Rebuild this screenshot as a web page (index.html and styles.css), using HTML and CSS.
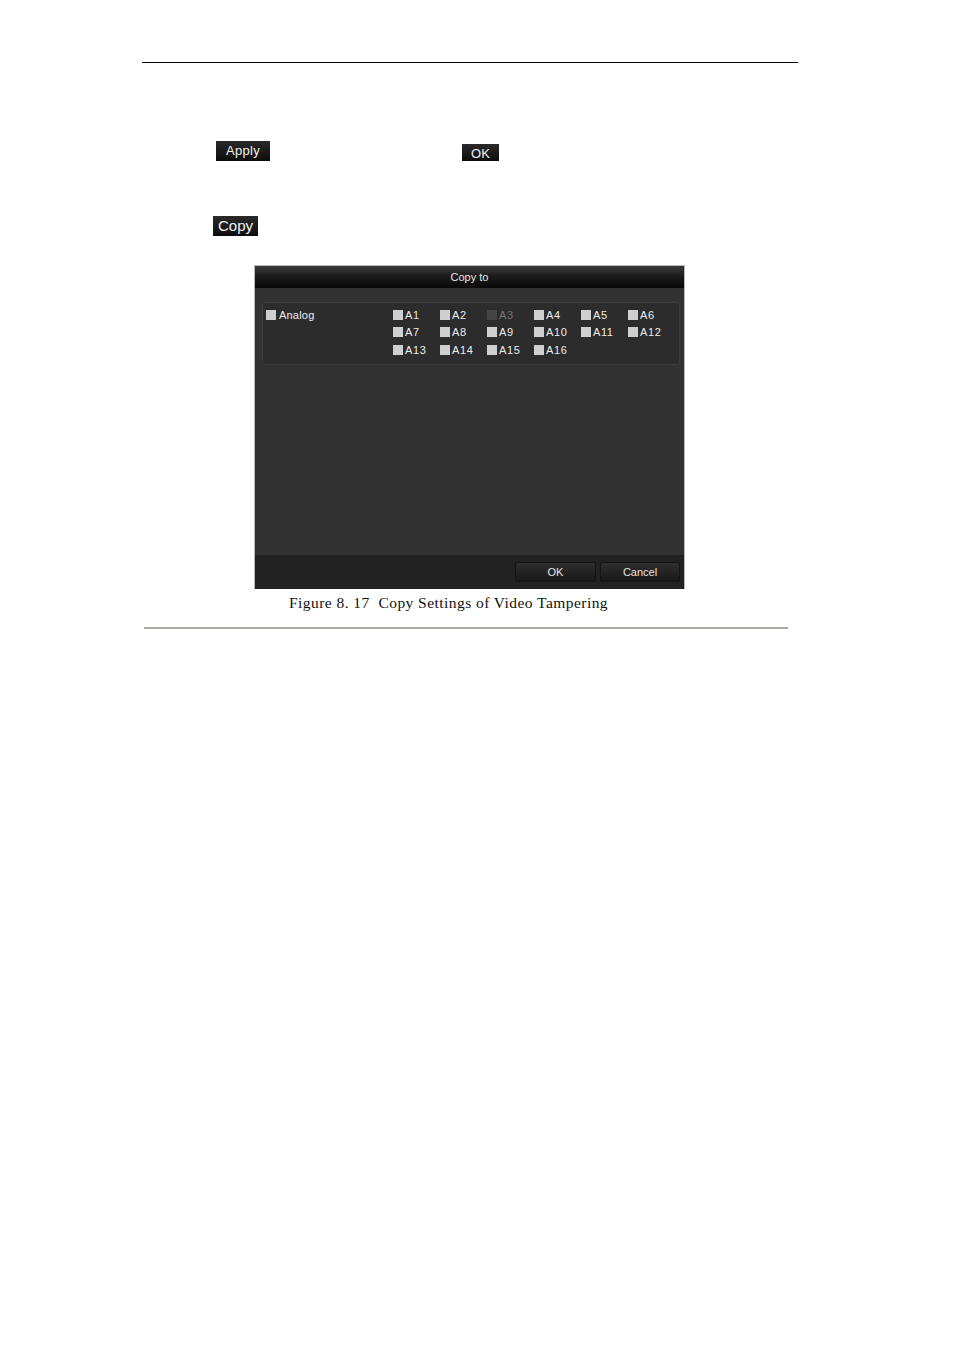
FILE: index.html
```html
<!DOCTYPE html>
<html>
<head>
<meta charset="utf-8">
<link rel="stylesheet" href="styles.css">
</head>
<body>
<div class="page">
  <div class="top-rule"></div>
  <div class="row row-apply">
    <span class="btn btn-apply">Apply</span>
    <span class="btn btn-ok">OK</span>
  </div>
  <div class="row row-copy">
    <span class="btn btn-copy">Copy</span>
  </div>
  <div class="figure">
    <div class="dialog">
      <div class="dlg-title">Copy to</div>
      <div class="dlg-body">
        <div class="panel">
          <div class="analog"><span class="cb"></span><span>Analog</span></div>
          <div class="grid">
            <div class="item"><span class="cb"></span>A1</div>
            <div class="item"><span class="cb"></span>A2</div>
            <div class="item disabled"><span class="cb"></span>A3</div>
            <div class="item"><span class="cb"></span>A4</div>
            <div class="item"><span class="cb"></span>A5</div>
            <div class="item"><span class="cb"></span>A6</div>
            <div class="item"><span class="cb"></span>A7</div>
            <div class="item"><span class="cb"></span>A8</div>
            <div class="item"><span class="cb"></span>A9</div>
            <div class="item"><span class="cb"></span>A10</div>
            <div class="item"><span class="cb"></span>A11</div>
            <div class="item"><span class="cb"></span>A12</div>
            <div class="item"><span class="cb"></span>A13</div>
            <div class="item"><span class="cb"></span>A14</div>
            <div class="item"><span class="cb"></span>A15</div>
            <div class="item"><span class="cb"></span>A16</div>
          </div>
        </div>
      </div>
      <div class="dlg-foot">
        <span class="dbtn dbtn-ok">OK</span>
        <span class="dbtn dbtn-cancel">Cancel</span>
      </div>
    </div>
    <div class="caption">Figure 8. 17 &nbsp;Copy Settings of Video Tampering</div>
  </div>
  <div class="bottom-rule"></div>
</div>
</body>
</html>
```
FILE: styles.css
```css
html, body {
  margin: 0;
  padding: 0;
  background: #fff;
}
.page {
  width: 954px;
  height: 1350px;
  padding-top: 62px;
  box-sizing: border-box;
  font-family: "Liberation Sans", Arial, sans-serif;
}
.top-rule {
  margin-left: 142px;
  width: 656px;
  height: 1px;
  background: #000;
}
.row {
  display: flex;
  align-items: flex-start;
}
.row-apply {
  margin-top: 78px;
  padding-left: 216px;
  height: 20px;
}
.btn {
  display: inline-flex;
  align-items: center;
  justify-content: center;
  background: linear-gradient(#2a2a2a, #0c0c0c);
  color: #f2f2f2;
  box-sizing: border-box;
}
.btn-apply {
  width: 54px;
  height: 20px;
  font-size: 13px;
  letter-spacing: 0.3px;
  padding-bottom: 1px;
}
.btn-ok {
  margin-left: 192px;
  margin-top: 3px;
  width: 37px;
  height: 17px;
  font-size: 13px;
  padding-top: 1px;
}
.row-copy {
  margin-top: 55px;
  padding-left: 213px;
  height: 20px;
}
.btn-copy {
  width: 45px;
  height: 20px;
  font-size: 15px;
  padding-bottom: 1px;
}
.figure {
  margin-top: 29px;
  padding-left: 254px;
}
.dialog {
  width: 431px;
  height: 324px;
  box-sizing: border-box;
  border: 1px solid #b8b8b8;
  border-bottom: none;
  display: flex;
  flex-direction: column;
  background: #323232;
}
.dlg-title {
  height: 22px;
  background: linear-gradient(#3a3a3a, #1c1c1c 45%, #080808);
  color: #e6e6e6;
  font-size: 11px;
  display: flex;
  align-items: center;
  justify-content: center;
}
.dlg-body {
  flex: 1;
  padding: 14px 4px 0 7px;
  background: #323232;
}
.panel {
  height: 63px;
  box-sizing: border-box;
  background: #2c2c2c;
  border: 1px solid #3c3c3c;
  border-radius: 3px;
  display: flex;
  padding: 6px 0 0 3px;
}
.analog {
  width: 127px;
  display: flex;
  align-items: flex-start;
  height: 12px;
  color: #ececec;
  font-size: 11px;
  line-height: 12px;
  letter-spacing: 0.2px;
}
.cb {
  display: inline-block;
  width: 10px;
  height: 10px;
  background: #cfcfcf;
  margin-right: 3px;
  flex: none;
}
.grid {
  display: grid;
  grid-template-columns: repeat(6, 47px);
  grid-template-rows: 17px 18px 17px;
}
.item {
  display: flex;
  align-items: flex-start;
  height: 12px;
  color: #ececec;
  font-size: 11px;
  line-height: 12px;
  letter-spacing: 0.6px;
}
.item .cb {
  margin-top: 1px;
  margin-right: 2px;
}
.analog .cb {
  margin-top: 1px;
}
.item.disabled {
  color: #777;
}
.item.disabled .cb {
  background: #444;
}
.dlg-foot {
  height: 34px;
  background: #222;
  display: flex;
  justify-content: flex-end;
  padding: 7px 4px 0 0;
  box-sizing: border-box;
  gap: 4px;
}
.dbtn {
  height: 20px;
  box-sizing: border-box;
  background: linear-gradient(#2f2f2f, #171717);
  border: 1px solid #141414;
  border-radius: 2px;
  color: #e6e6e6;
  font-size: 11px;
  display: flex;
  align-items: center;
  justify-content: center;
}
.dbtn-ok { width: 81px; }
.dbtn-cancel { width: 80px; }
.caption {
  margin-top: 4px;
  padding-left: 35px;
  font-family: "Liberation Serif", "Times New Roman", serif;
  font-size: 15.5px;
  letter-spacing: 0.45px;
  color: #111;
  line-height: 20px;
}
.bottom-rule {
  margin-top: 14px;
  margin-left: 144px;
  width: 644px;
  height: 2px;
  background: #aaa8a2;
}
```
